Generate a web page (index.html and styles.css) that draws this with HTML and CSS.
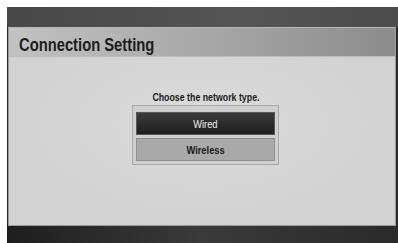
FILE: index.html
```html
<!DOCTYPE html>
<html>
<head>
<meta charset="utf-8">
<link rel="stylesheet" href="styles.css">
</head>
<body>
<div class="screen">
  <div class="topbar"></div>
  <div class="panel">
    <div class="header"><h1 class="title">Connection Setting</h1></div>
    <div class="content">
      <p class="prompt">Choose the network type.</p>
      <div class="choices">
        <div class="choice choice-active"><span class="label">Wired</span></div>
        <div class="choice"><span class="label">Wireless</span></div>
      </div>
    </div>
  </div>
  <div class="bottombar"></div>
</div>
</body>
</html>
```
FILE: styles.css
```css
html, body {
  margin: 0;
  padding: 0;
  background: #ffffff;
}
body {
  width: 398px;
  height: 243px;
  overflow: hidden;
  font-family: "Liberation Sans", Arial, sans-serif;
}
.screen {
  margin: 7px 0 0 7px;
  width: 391px;
  height: 236px;
  background: #2a2a2a;
  display: flex;
  flex-direction: column;
}
.topbar {
  height: 20px;
  background: linear-gradient(to right, #474747, #555555 60%, #4c4c4c);
}
.panel {
  margin-left: 1px;
  width: 388px;
  height: 199px;
  box-sizing: border-box;
  border: 1px solid #9a9a9a;
  border-top-color: #b8b8b8;
  display: flex;
  flex-direction: column;
  background: #d6d6d6;
}
.header {
  height: 28px;
  background: linear-gradient(to right, #c2c2c2, #a8a8a8 50%, #8c8c8c);
  border-bottom: 1px solid #bdbdbd;
  display: flex;
  align-items: center;
  padding-left: 10px;
}
.title {
  margin: 6px 0 0 0;
  font-size: 18px;
  font-weight: bold;
  color: #1c1c1c;
  transform: scaleX(0.82);
  transform-origin: left center;
  white-space: nowrap;
}
.content {
  flex: 1;
  display: flex;
  flex-direction: column;
  align-items: center;
  padding-top: 34px;
  padding-left: 7px;
  background: radial-gradient(ellipse at 50% 40%, #dcdcdc, #d2d2d2 70%);
}
.prompt {
  margin: 0;
  height: 14px;
  line-height: 13px;
  font-size: 11px;
  font-weight: bold;
  color: #1a1a1a;
  transform: scaleX(0.8);
  white-space: nowrap;
}
.choices {
  width: 147px;
  box-sizing: border-box;
  border: 1px solid #a8a8a8;
  background: #cfcfcf;
  padding: 6px 3px 3px 3px;
  display: flex;
  flex-direction: column;
  gap: 3px;
}
.choice {
  height: 23px;
  box-sizing: border-box;
  border: 1px solid #8e8e8e;
  background: #a9a9a9;
  color: #1a1a1a;
  font-size: 11px;
  font-weight: bold;
  display: flex;
  align-items: center;
  justify-content: center;
}
.label {
  display: inline-block;
  transform: scaleX(0.85);
}
.choice-active {
  background: linear-gradient(to bottom, #3c3c3c, #1e1e1e);
  border-color: #555555;
  color: #f2f2f2;
  font-weight: normal;
}
.bottombar {
  flex: 1;
  background: linear-gradient(to right, #1e1e1e, #3a3a3a 50%, #2a2a2a);
}
```
